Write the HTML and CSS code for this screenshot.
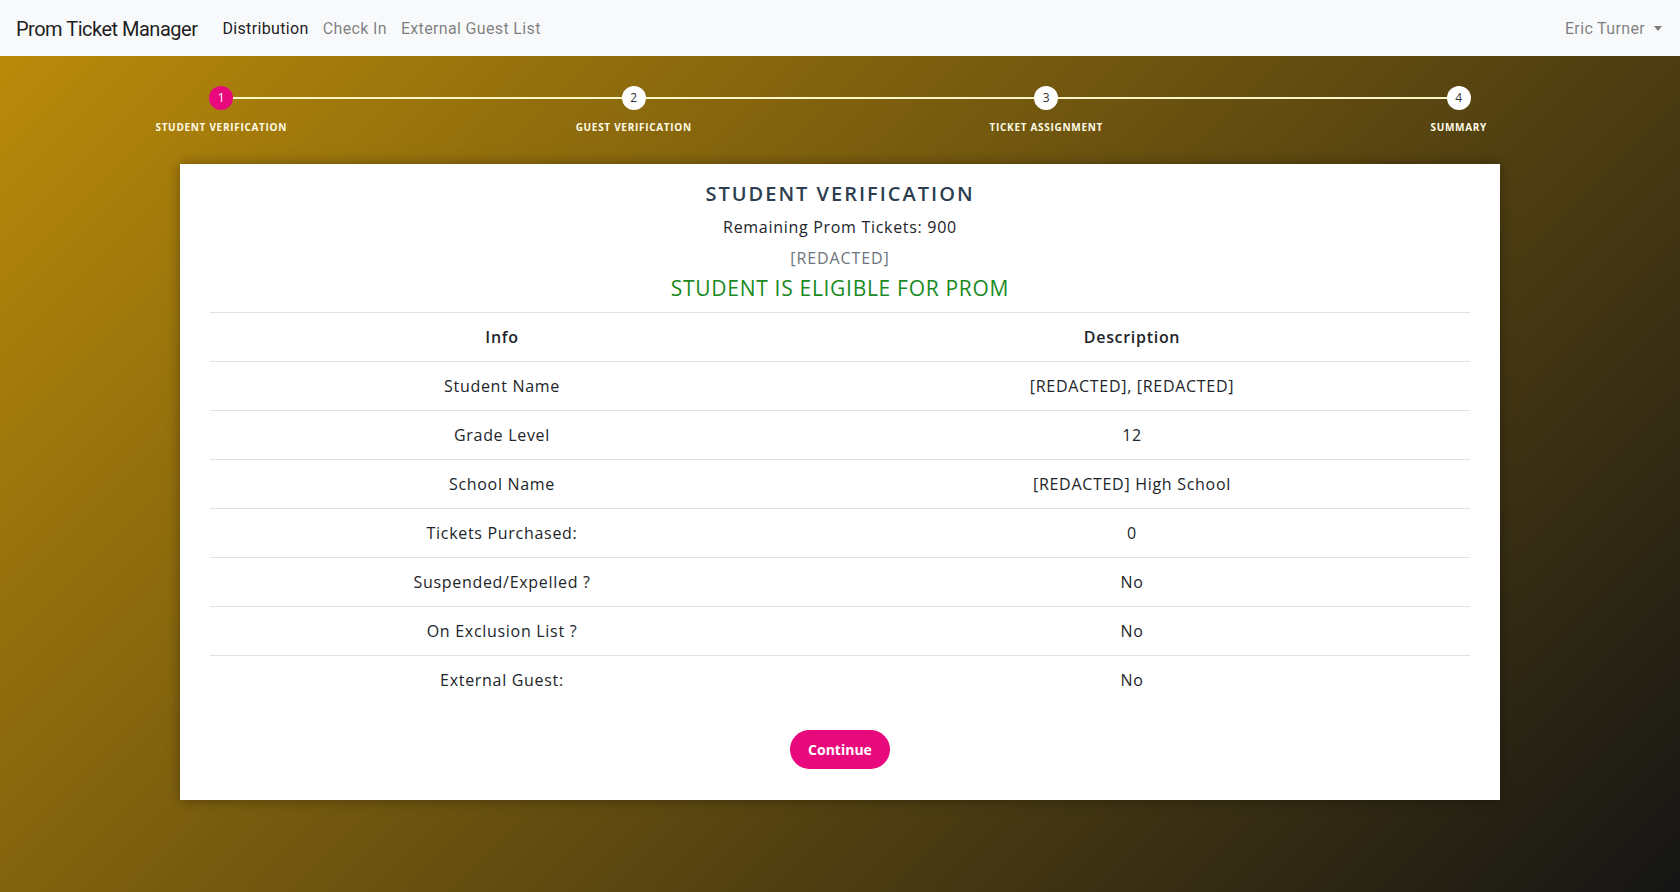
FILE: index.html
```html
<!DOCTYPE html>
<html lang="en">
<head>
<meta charset="utf-8">
<title>Prom Ticket Manager</title>
<link rel="stylesheet" href="styles.css">
</head>
<body>
<nav class="navbar">
  <a class="brand" href="#">Prom Ticket Manager</a>
  <ul class="nav-links">
    <li><a class="nav-link active" href="#">Distribution</a></li>
    <li><a class="nav-link" href="#">Check In</a></li>
    <li><a class="nav-link" href="#">External Guest List</a></li>
  </ul>
  <a class="user" href="#">Eric Turner<span class="caret"></span></a>
</nav>
<main class="stage">
  <ol class="stepper">
    <li class="step current"><span class="dot">1</span><span class="step-label">STUDENT VERIFICATION</span></li>
    <li class="step"><span class="dot">2</span><span class="step-label">GUEST VERIFICATION</span></li>
    <li class="step"><span class="dot">3</span><span class="step-label">TICKET ASSIGNMENT</span></li>
    <li class="step"><span class="dot">4</span><span class="step-label">SUMMARY</span></li>
  </ol>
  <section class="card">
    <h1 class="card-title">STUDENT VERIFICATION</h1>
    <p class="remaining">Remaining Prom Tickets: 900</p>
    <p class="student-id">[REDACTED]</p>
    <p class="eligible">STUDENT IS ELIGIBLE FOR PROM</p>
    <table class="info-table">
      <thead>
        <tr><th class="col-info">Info</th><th>Description</th></tr>
      </thead>
      <tbody>
        <tr><td>Student Name</td><td>[REDACTED], [REDACTED]</td></tr>
        <tr><td>Grade Level</td><td>12</td></tr>
        <tr><td>School Name</td><td>[REDACTED] High School</td></tr>
        <tr><td>Tickets Purchased:</td><td>0</td></tr>
        <tr><td>Suspended/Expelled ?</td><td>No</td></tr>
        <tr><td>On Exclusion List ?</td><td>No</td></tr>
        <tr><td>External Guest:</td><td>No</td></tr>
      </tbody>
    </table>
    <div class="actions"><button class="btn-continue" type="button">Continue</button></div>
  </section>
</main>
</body>
</html>
```
FILE: styles.css
```css
* { box-sizing: border-box; }
html, body { margin: 0; padding: 0; height: 100%; }
body {
  font-family: "Open Sans", "Noto Sans", sans-serif;
  color: #212529;
  display: flex;
  flex-direction: column;
  overflow: hidden;
}
a { text-decoration: none; }

.navbar {
  height: 56px;
  flex: 0 0 56px;
  background: #f8f9fa;
  display: flex;
  align-items: center;
  padding: 0 18px 0 16px;
  font-family: Roboto, "Liberation Sans", sans-serif;
}
.brand {
  font-size: 20px;
  color: rgba(0,0,0,.9);
  letter-spacing: -0.5px;
  margin-right: 18px;
  padding-top: 1px;
}
.nav-links {
  list-style: none;
  margin: 0;
  padding: 0;
  display: flex;
  flex: 1;
}
.nav-link {
  display: block;
  padding: 0 7px;
  font-size: 16px;
  letter-spacing: 0.35px;
  color: rgba(0,0,0,.5);
}
.nav-link.active { color: rgba(0,0,0,.9); }
.user {
  font-size: 16px;
  letter-spacing: 0.35px;
  color: rgba(0,0,0,.5);
  display: flex;
  align-items: center;
}
.caret {
  display: inline-block;
  margin-left: 9px;
  border-top: 5px solid rgba(0,0,0,.5);
  border-left: 4.5px solid transparent;
  border-right: 4.5px solid transparent;
}

.stage {
  flex: 1;
  background: linear-gradient(135deg, #b98a0a 0%, #151515 100%);
}

.stepper {
  list-style: none;
  margin: 0;
  padding: 30px 15px 0;
  display: grid;
  grid-template-columns: repeat(4, 1fr);
}
.step {
  position: relative;
  display: flex;
  flex-direction: column;
  align-items: center;
}
.step:not(:last-child)::after {
  content: "";
  position: absolute;
  top: 11px;
  left: 50%;
  width: 100%;
  height: 2px;
  background: #fff6c6;
}
.dot {
  position: relative;
  z-index: 1;
  width: 24px;
  height: 24px;
  border-radius: 50%;
  background: #fff;
  color: #333;
  font-size: 12px;
  line-height: 24px;
  text-align: center;
}
.step.current .dot { background: #e8097c; color: #fff; }
.step-label {
  margin-top: 11px;
  font-size: 10px;
  line-height: 12px;
  font-weight: 700;
  letter-spacing: 0.7px;
  color: #fffbe6;
}

.card {
  width: 1320px;
  margin: 31px auto 0;
  background: #fff;
  padding: 15px 30px 31px;
  box-shadow: 0 0 12px rgba(0,0,0,.35);
  text-align: center;
}
.card-title {
  margin: 0 0 3px;
  font-size: 20px;
  line-height: 30px;
  font-weight: 600;
  letter-spacing: 2px;
  color: #2c3e50;
}
.remaining, .student-id {
  margin: 0;
  font-size: 16px;
  line-height: 30px;
  letter-spacing: 0.7px;
}
.student-id { color: #6c757d; margin-top: 1px; letter-spacing: 0.9px; }
.eligible {
  margin: 0 0 9px;
  font-size: 21px;
  line-height: 30px;
  letter-spacing: 0.7px;
  color: #198a1e;
}

.info-table {
  width: 100%;
  border-collapse: collapse;
  font-size: 16px;
  letter-spacing: 0.7px;
}
.info-table th, .info-table td {
  padding: 12px;
  line-height: 24px;
  border-top: 1px solid #dee2e6;
  text-align: center;
}
.info-table th { font-weight: 600; }
.col-info { width: 584px; }

.actions {
  margin-top: 26px;
  display: flex;
  justify-content: center;
}
.btn-continue {
  height: 39px;
  padding: 0 18px;
  border: 0;
  border-radius: 20px;
  background: #e8097c;
  color: #fff;
  font-family: "Open Sans", sans-serif;
  font-size: 14px;
  font-weight: 700;
}
```
